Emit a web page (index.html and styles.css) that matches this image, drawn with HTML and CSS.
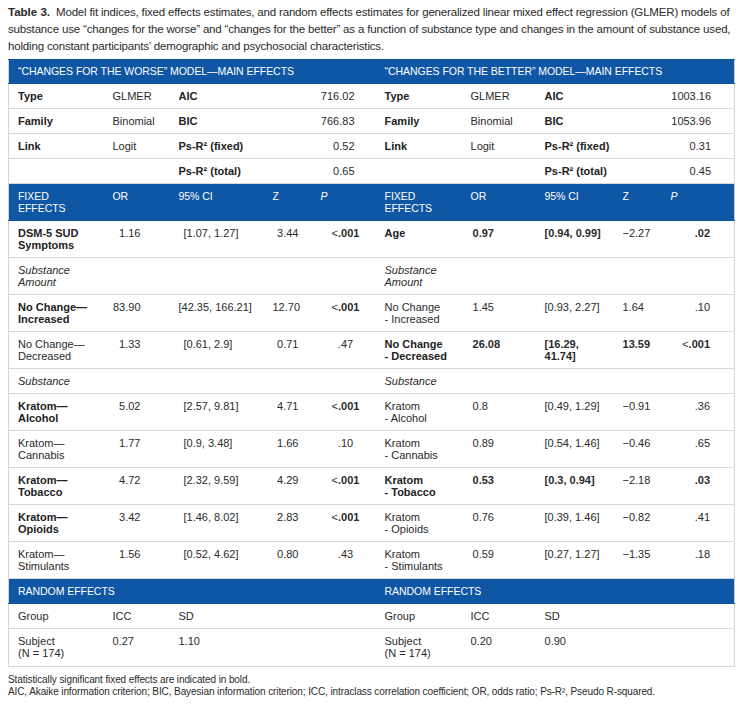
FILE: index.html
```html
<!DOCTYPE html>
<html>
<head>
<meta charset="utf-8">
<link rel="stylesheet" href="styles.css">
</head>
<body>
<p class="caption"><b class="lbl">Table 3.</b> Model fit indices, fixed effects estimates, and random effects estimates for generalized linear mixed effect regression (GLMER) models of substance use “changes for the worse” and “changes for the better” as a function of substance type and changes in the amount of substance used, holding constant participants’ demographic and psychosocial characteristics.</p>
<table class="tbl">
<colgroup>
<col style="width:95px"><col style="width:66px"><col style="width:94px"><col style="width:48px"><col style="width:60px">
<col style="width:90px"><col style="width:74px"><col style="width:78px"><col style="width:48px"><col style="width:73px">
</colgroup>
<tr class="blue">
<th colspan="5">“CHANGES FOR THE WORSE” MODEL—MAIN EFFECTS</th>
<th colspan="5" class="f6">“CHANGES FOR THE BETTER” MODEL—MAIN EFFECTS</th>
</tr>
<tr>
<td class="lab">Type</td><td>GLMER</td><td class="lab">AIC</td><td colspan="2" class="vl">716.02</td>
<td class="lab f6">Type</td><td>GLMER</td><td class="lab">AIC</td><td colspan="2" class="vr">1003.16</td>
</tr>
<tr>
<td class="lab">Family</td><td>Binomial</td><td class="lab">BIC</td><td colspan="2" class="vl">766.83</td>
<td class="lab f6">Family</td><td>Binomial</td><td class="lab">BIC</td><td colspan="2" class="vr">1053.96</td>
</tr>
<tr>
<td class="lab">Link</td><td>Logit</td><td class="lab">Ps-R² (fixed)</td><td colspan="2" class="vl">0.52</td>
<td class="lab f6">Link</td><td>Logit</td><td class="lab">Ps-R² (fixed)</td><td colspan="2" class="vr">0.31</td>
</tr>
<tr>
<td></td><td></td><td class="lab">Ps-R² (total)</td><td colspan="2" class="vl">0.65</td>
<td class="f6"></td><td></td><td class="lab">Ps-R² (total)</td><td colspan="2" class="vr">0.45</td>
</tr>
<tr class="blue">
<th>FIXED<br>EFFECTS</th><th>OR</th><th>95% CI</th><th>Z</th><th><i>P</i></th>
<th class="f6">FIXED<br>EFFECTS</th><th>OR</th><th>95% CI</th><th>Z</th><th><i>P</i></th>
</tr>
<tr>
<td class="lab">DSM-5 SUD<br>Symptoms</td><td class="orl">1.16</td><td class="cil">[1.07, 1.27]</td><td class="zl">3.44</td><td class="pl">&lt;<b>.001</b></td>
<td class="lab f6">Age</td><td class="orr"><b>0.97</b></td><td><b>[0.94, 0.99]</b></td><td>−2.27</td><td class="pr"><b>.02</b></td>
</tr>
<tr>
<td class="it">Substance<br>Amount</td><td></td><td></td><td></td><td></td>
<td class="it f6">Substance<br>Amount</td><td></td><td></td><td></td><td></td>
</tr>
<tr>
<td class="lab">No Change—<br>Increased</td><td class="orl">83.90</td><td class="cil long">[42.35, 166.21]</td><td class="zl">12.70</td><td class="pl">&lt;<b>.001</b></td>
<td class="f6">No Change<br>- Increased</td><td class="orr">1.45</td><td>[0.93, 2.27]</td><td>1.64</td><td class="pr">.10</td>
</tr>
<tr>
<td>No Change—<br>Decreased</td><td class="orl">1.33</td><td class="cil">[0.61, 2.9]</td><td class="zl">0.71</td><td class="pl">.47</td>
<td class="lab f6">No Change<br>- Decreased</td><td class="orr"><b>26.08</b></td><td><b>[16.29,<br>41.74]</b></td><td><b>13.59</b></td><td class="pr">&lt;<b>.001</b></td>
</tr>
<tr>
<td class="it">Substance</td><td></td><td></td><td></td><td></td>
<td class="it f6">Substance</td><td></td><td></td><td></td><td></td>
</tr>
<tr>
<td class="lab">Kratom—<br>Alcohol</td><td class="orl">5.02</td><td class="cil">[2.57, 9.81]</td><td class="zl">4.71</td><td class="pl">&lt;<b>.001</b></td>
<td class="f6">Kratom<br>- Alcohol</td><td class="orr">0.8</td><td>[0.49, 1.29]</td><td>−0.91</td><td class="pr">.36</td>
</tr>
<tr>
<td>Kratom—<br>Cannabis</td><td class="orl">1.77</td><td class="cil">[0.9, 3.48]</td><td class="zl">1.66</td><td class="pl">.10</td>
<td class="f6">Kratom<br>- Cannabis</td><td class="orr">0.89</td><td>[0.54, 1.46]</td><td>−0.46</td><td class="pr">.65</td>
</tr>
<tr>
<td class="lab">Kratom—<br>Tobacco</td><td class="orl">4.72</td><td class="cil">[2.32, 9.59]</td><td class="zl">4.29</td><td class="pl">&lt;<b>.001</b></td>
<td class="lab f6">Kratom<br>- Tobacco</td><td class="orr"><b>0.53</b></td><td><b>[0.3, 0.94]</b></td><td>−2.18</td><td class="pr"><b>.03</b></td>
</tr>
<tr>
<td class="lab">Kratom—<br>Opioids</td><td class="orl">3.42</td><td class="cil">[1.46, 8.02]</td><td class="zl">2.83</td><td class="pl">&lt;<b>.001</b></td>
<td class="f6">Kratom<br>- Opioids</td><td class="orr">0.76</td><td>[0.39, 1.46]</td><td>−0.82</td><td class="pr">.41</td>
</tr>
<tr>
<td>Kratom—<br>Stimulants</td><td class="orl">1.56</td><td class="cil">[0.52, 4.62]</td><td class="zl">0.80</td><td class="pl">.43</td>
<td class="f6">Kratom<br>- Stimulants</td><td class="orr">0.59</td><td>[0.27, 1.27]</td><td>−1.35</td><td class="pr">.18</td>
</tr>
<tr class="blue">
<th colspan="5">RANDOM EFFECTS</th>
<th colspan="5" class="f6">RANDOM EFFECTS</th>
</tr>
<tr>
<td>Group</td><td>ICC</td><td>SD</td><td></td><td></td>
<td class="f6">Group</td><td>ICC</td><td>SD</td><td></td><td></td>
</tr>
<tr class="last">
<td>Subject<br>(N = 174)</td><td>0.27</td><td>1.10</td><td></td><td></td>
<td class="f6">Subject<br>(N = 174)</td><td>0.20</td><td>0.90</td><td></td><td></td>
</tr>
</table>
<div class="notes">
<p>Statistically significant fixed effects are indicated in bold.</p>
<p>AIC, Akaike information criterion; BIC, Bayesian information criterion; ICC, intraclass correlation coefficient; OR, odds ratio; Ps-R², Pseudo R-squared.</p>
</div>
</body>
</html>
```
FILE: styles.css
```css
html, body {
  margin: 0;
  background: #ffffff;
}
body {
  padding: 4px 8px 0 8px;
  font-family: "Liberation Sans", Arial, sans-serif;
  color: #2a2a2a;
}
.caption {
  margin: 0;
  font-size: 11.5px;
  line-height: 17px;
  letter-spacing: -0.17px;
  color: #2a2a2a;
}
.caption .lbl {
  font-weight: bold;
  letter-spacing: 0;
  margin-right: 3px;
}
.tbl {
  margin-top: 4px;
  width: 726px;
  table-layout: fixed;
  border-collapse: collapse;
  border-left: 1px solid #d4d4d4;
  border-right: 1px solid #d4d4d4;
  border-bottom: 1px solid #d4d4d4;
  font-size: 11px;
  line-height: 12px;
}
.tbl th, .tbl td {
  padding: 6px 0 6px 9px;
  text-align: left;
  vertical-align: top;
  border-bottom: 1px solid #d9d9d9;
  white-space: nowrap;
}
.last td {
  padding-bottom: 7px;
}
.blue th {
  background: #0f56a4;
  color: #ffffff;
  font-weight: normal;
  font-size: 10.5px;
  border-bottom: 1px solid #0f56a4;
  letter-spacing: -0.05px;
}
.blue:first-child th {
  border-top: 1px solid #0f56a4;
  padding-top: 5px;
}
.lab {
  font-weight: bold;
  color: #222222;
}
.it {
  font-style: italic;
}
.f6 {
  padding-left: 13px !important;
}
.vl {
  text-align: right !important;
  padding-right: 17px !important;
}
.vr {
  text-align: right !important;
  padding-right: 23px !important;
}
.orl {
  text-align: right !important;
  padding-right: 29px !important;
}
.cil {
  padding-left: 14px !important;
}
.cil.long {
  padding-left: 9px !important;
}
.zl {
  text-align: right !important;
  padding-right: 13px !important;
}
.pl {
  text-align: center !important;
  padding-left: 8px !important;
}
.orr {
  padding-left: 11px !important;
}
.pr {
  text-align: right !important;
  padding-right: 24px !important;
}
.notes {
  margin-top: 7px;
  font-size: 10px;
  line-height: 12px;
  letter-spacing: -0.1px;
  color: #2a2a2a;
}
.notes p {
  margin: 0;
}
```
